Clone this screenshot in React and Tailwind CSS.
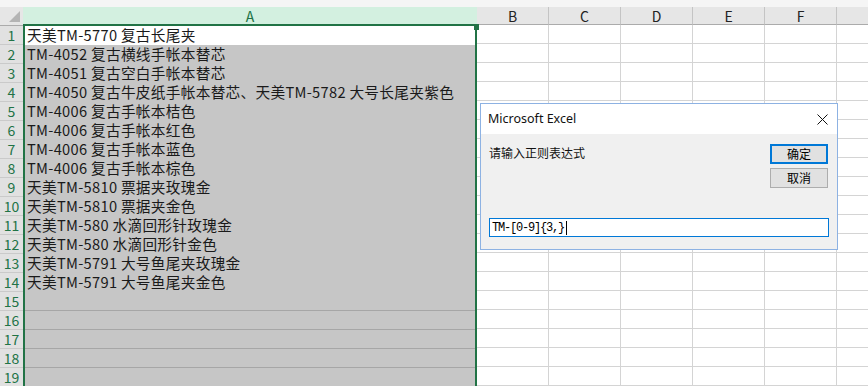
import React from 'react';

const ROWS = [
  '天美TM-5770 复古长尾夹',
  'TM-4052 复古横线手帐本替芯',
  'TM-4051 复古空白手帐本替芯',
  'TM-4050 复古牛皮纸手帐本替芯、天美TM-5782 大号长尾夹紫色',
  'TM-4006 复古手帐本桔色',
  'TM-4006 复古手帐本红色',
  'TM-4006 复古手帐本蓝色',
  'TM-4006 复古手帐本棕色',
  '天美TM-5810 票据夹玫瑰金',
  '天美TM-5810 票据夹金色',
  '天美TM-580 水滴回形针玫瑰金',
  '天美TM-580 水滴回形针金色',
  '天美TM-5791 大号鱼尾夹玫瑰金',
  '天美TM-5791 大号鱼尾夹金色',
  '', '', '', '', '',
];

const OTHER_COLS = ['B', 'C', 'D', 'E', 'F'];

const cjk = 'font-["Noto_Sans_CJK_SC","Noto_Sans",sans-serif]';

const RowHeaders = () => (
  <div className="w-[23px] flex flex-col shrink-0">
    <div className="h-[19px] bg-[#e6e6e6] border-b border-[#ababab] relative">
      <svg className="absolute right-[3px] bottom-[3px]" width="11" height="11" viewBox="0 0 11 11">
        <polygon points="11,0 11,11 0,11" fill="#b4b4b4" />
      </svg>
    </div>
    {ROWS.map((_, i) => (
      <div
        key={i}
        className={`h-[19px] shrink-0 bg-[#e1e1e1] border-b border-[#cacaca] flex items-center justify-center text-[14px] leading-none text-[#217346] ${cjk}`}
      >
        {i + 1}
      </div>
    ))}
  </div>
);

const ColumnA = () => (
  <div className="w-[454px] flex flex-col shrink-0 relative">
    <div className={`h-[17px] bg-[#d3f0e0] flex items-center justify-center text-[14px] leading-none text-[#217346] ${cjk}`}>
      A
    </div>
    <div className="border-t-2 border-l-2 border-r-2 border-[#217346] flex flex-col">
      {ROWS.map((text, i) => (
        <div
          key={i}
          className={`h-[19px] shrink-0 flex items-center pl-[2px] text-[14.67px] leading-none tracking-[0.3px] text-[#1a1a1a] whitespace-nowrap ${cjk} ${
            i === 0 ? 'bg-white' : 'bg-[#c6c6c6]'
          } ${i >= 14 && i <= 17 ? 'border-b border-[#a6a6a6]' : ''}`}
        >
          {text}
        </div>
      ))}
    </div>
    <div className="absolute left-[451px] top-[17px] w-[5px] h-[6px] bg-[#217346]" />
  </div>
);

const PlainColumn = ({ label, grow }) => (
  <div className={`flex flex-col ${grow ? 'flex-1' : 'w-[72px] shrink-0'}`}>
    <div
      className={`h-[18px] bg-[#e6e6e6] border-b border-[#ababab] flex items-center justify-center text-[14px] leading-none text-[#222] ${cjk} ${
        grow ? '' : 'border-r border-r-[#c4c4c4]'
      }`}
    >
      {label}
    </div>
    {ROWS.map((_, i) => (
      <div
        key={i}
        className={`h-[19px] shrink-0 bg-white border-b border-[#d4d4d4] ${grow ? '' : 'border-r'}`}
      />
    ))}
  </div>
);

const Dialog = () => (
  <div className="absolute left-[480px] top-[103px] w-[358px] h-[147px] border border-[#8db2e3] bg-[#f0f0f0] flex flex-col">
    <div className="h-[30px] bg-white flex items-center justify-between pl-[7px] pr-[9px]">
      <span className='text-[12.5px] text-[#111] font-["Noto_Sans",sans-serif]'>Microsoft Excel</span>
      <svg width="11" height="11" viewBox="0 0 11 11">
        <path d="M0.5 0.5 L10.5 10.5 M10.5 0.5 L0.5 10.5" stroke="#111" strokeWidth="1" />
      </svg>
    </div>
    <div className="flex-1 flex flex-col pl-[8px] pr-[8px] pt-[10px]">
      <div className="flex">
        <div className={`flex-1 pt-[2px] text-[12px] leading-[14px] text-[#111] ${cjk}`}>请输入正则表达式</div>
        <div className="flex flex-col gap-[4px] mr-[1px]">
          <button className={`w-[58px] h-[20px] border-2 border-[#0078d7] bg-[#e1e1e1] flex items-center justify-center text-[12px] leading-none text-black ${cjk}`}>
            确定
          </button>
          <button className={`w-[58px] h-[20px] border border-[#adadad] bg-[#e1e1e1] flex items-center justify-center text-[12px] leading-none text-black ${cjk}`}>
            取消
          </button>
        </div>
      </div>
      <div className="mt-[30px] h-[19px] border border-[#0078d7] bg-white flex items-center pl-[2px]">
        <span className='text-[12px] leading-none tracking-[-1.2px] text-black font-["Liberation_Mono",monospace]'>
          TM-[0-9]{'{'}3,{'}'}
        </span>
        <span className="ml-[2px] w-px h-[14px] bg-black" />
      </div>
    </div>
  </div>
);

export default function App() {
  return (
    <div className="w-[868px] h-[386px] overflow-hidden relative bg-white flex flex-col">
      <div className="h-[7px] bg-[#f5f5f5] shrink-0" />
      <div className="flex flex-1">
        <RowHeaders />
        <ColumnA />
        {OTHER_COLS.map(c => (
          <PlainColumn key={c} label={c} />
        ))}
        <PlainColumn label="" grow />
      </div>
      <Dialog />
    </div>
  );
}
